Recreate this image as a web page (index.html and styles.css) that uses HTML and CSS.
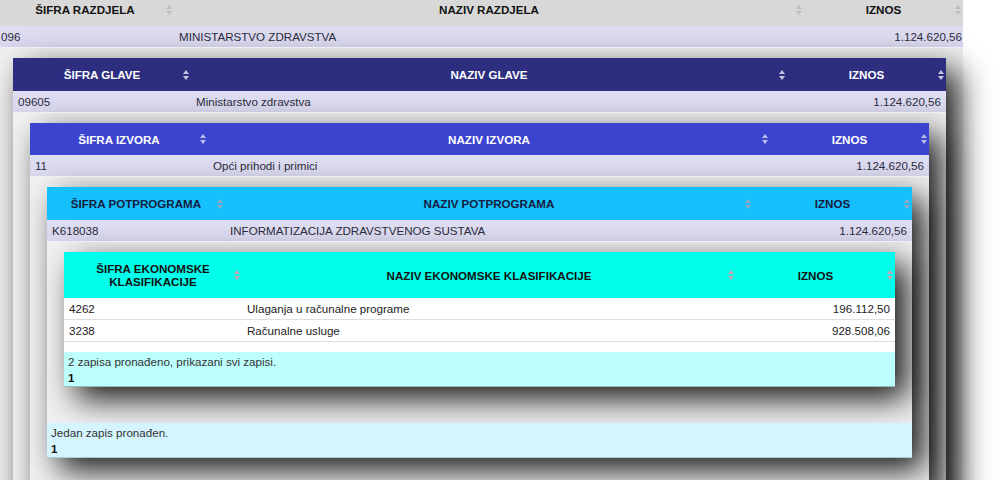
FILE: index.html
```html
<!DOCTYPE html>
<html lang="hr">
<head>
<meta charset="utf-8">
<title>Proračun</title>
<link rel="stylesheet" href="styles.css">
</head>
<body>
<div class="dt l0 root">
  <table class="grid t0">
    <colgroup><col class="c1"><col><col class="c3"></colgroup>
    <thead><tr><th>ŠIFRA RAZDJELA</th><th>NAZIV RAZDJELA</th><th>IZNOS</th></tr></thead>
    <tbody>
      <tr class="row"><td>096</td><td>MINISTARSTVO ZDRAVSTVA</td><td class="num">1.124.620,56</td></tr>
      <tr class="child"><td colspan="3">
        <div class="dt l1 nested">
          <table class="grid t1">
            <colgroup><col class="c1"><col><col class="c3"></colgroup>
            <thead><tr><th>ŠIFRA GLAVE</th><th>NAZIV GLAVE</th><th>IZNOS</th></tr></thead>
            <tbody>
              <tr class="row"><td>09605</td><td>Ministarstvo zdravstva</td><td class="num">1.124.620,56</td></tr>
              <tr class="child"><td colspan="3">
                <div class="dt l2 nested">
                  <table class="grid t2">
                    <colgroup><col class="c1"><col><col class="c3"></colgroup>
                    <thead><tr><th>ŠIFRA IZVORA</th><th>NAZIV IZVORA</th><th>IZNOS</th></tr></thead>
                    <tbody>
                      <tr class="row"><td>11</td><td>Opći prihodi i primici</td><td class="num">1.124.620,56</td></tr>
                      <tr class="child"><td colspan="3">
                        <div class="dt l3 nested">
                          <table class="grid t3">
                            <colgroup><col class="c1"><col><col class="c3"></colgroup>
                            <thead><tr><th>ŠIFRA POTPROGRAMA</th><th>NAZIV POTPROGRAMA</th><th>IZNOS</th></tr></thead>
                            <tbody>
                              <tr class="row"><td>K618038</td><td>INFORMATIZACIJA ZDRAVSTVENOG SUSTAVA</td><td class="num">1.124.620,56</td></tr>
                              <tr class="child"><td colspan="3">
                                <div class="dt l4 nested">
                                  <table class="grid t4">
                                    <colgroup><col class="c1"><col><col class="c3"></colgroup>
                                    <thead><tr><th>ŠIFRA EKONOMSKE KLASIFIKACIJE</th><th>NAZIV EKONOMSKE KLASIFIKACIJE</th><th>IZNOS</th></tr></thead>
                                    <tbody>
                                      <tr><td>4262</td><td>Ulaganja u računalne programe</td><td class="num">196.112,50</td></tr>
                                      <tr><td>3238</td><td>Računalne usluge</td><td class="num">928.508,06</td></tr>
                                    </tbody>
                                  </table>
                                  <div class="info"><div>2 zapisa pronađeno, prikazani svi zapisi.</div><div class="pg">1</div></div>
                                </div>
                              </td></tr>
                            </tbody>
                          </table>
                          <div class="info"><div>Jedan zapis pronađen.</div><div class="pg">1</div></div>
                        </div>
                      </td></tr>
                    </tbody>
                  </table>
                </div>
              </td></tr>
            </tbody>
          </table>
        </div>
      </td></tr>
    </tbody>
  </table>
</div>
</body>
</html>
```
FILE: styles.css
```css
html, body {
  margin: 0;
  background: #fff;
  overflow: hidden;
}
body {
  font-family: "Liberation Sans", Arial, sans-serif;
  font-size: 11.6px;
  line-height: 13px;
  color: #2a2a3a;
}
.root {
  margin: -7px 0 0 -4px;
  width: 967px;
}
.grid {
  width: 100%;
  border-collapse: collapse;
  table-layout: fixed;
}
.c1 { width: 178px; }
.c3 { width: 159px; }

.grid th {
  position: relative;
  padding: 10px 14px;
  font-weight: bold;
  text-align: center;
  line-height: 13px;
}
.grid th::before,
.grid th::after {
  content: "";
  position: absolute;
  right: 2px;
  width: 0;
  height: 0;
  border-left: 3.5px solid transparent;
  border-right: 3.5px solid transparent;
}
.grid th::before {
  top: calc(50% - 5px);
  border-bottom: 4px solid var(--ico);
}
.grid th::after {
  top: calc(50% + 1px);
  border-top: 4px solid var(--ico);
}
.grid td {
  padding: 4px 5px;
  white-space: nowrap;
}
.grid .row > td {
  background: linear-gradient(#dfdef3, #d8d7ed);
  border-bottom: 1px solid #eeeef4;
}
.num { text-align: right; }
.grid .child > td {
  padding: 10px 17px 36px;
  background: #f1f1f1;
  white-space: normal;
}
.nested {
  box-shadow: 12px 12px 30px rgba(0, 0, 0, 0.9);
}

.t0 > thead th { background: #d8d8d8; color: #111; --ico: #bdbdbd; }
.t1 > thead th { background: #2d2e80; color: #fff; --ico: #c5c6dc; }
.t2 > thead th { background: #3c44cf; color: #fff; --ico: #b9bce8; padding-bottom: 9px; }
.t3 > thead th { background: #16c0fd; color: #141c3c; --ico: #94a7c4; }
.t4 > thead th { background: #00ffea; color: #111; --ico: #c9a4b4; }

.t0 > tbody > .row > .num { padding-right: 1px; }

.l4 { background: #fff; }
.t4 { margin-bottom: 10px; }
.t4 > tbody > tr > td {
  background: #fff;
  border-bottom: 1px solid #dedede;
  color: #222;
}

.info {
  padding: 2px 4px 0;
  line-height: 16px;
  color: #333;
  background: #d4f5fd;
  border-bottom: 1px solid #a9cfd6;
}
.l4 > .info {
  background: #bdfffc;
  border-bottom-color: #8fbcbc;
}
.pg {
  font-weight: bold;
  color: #111;
}
```
